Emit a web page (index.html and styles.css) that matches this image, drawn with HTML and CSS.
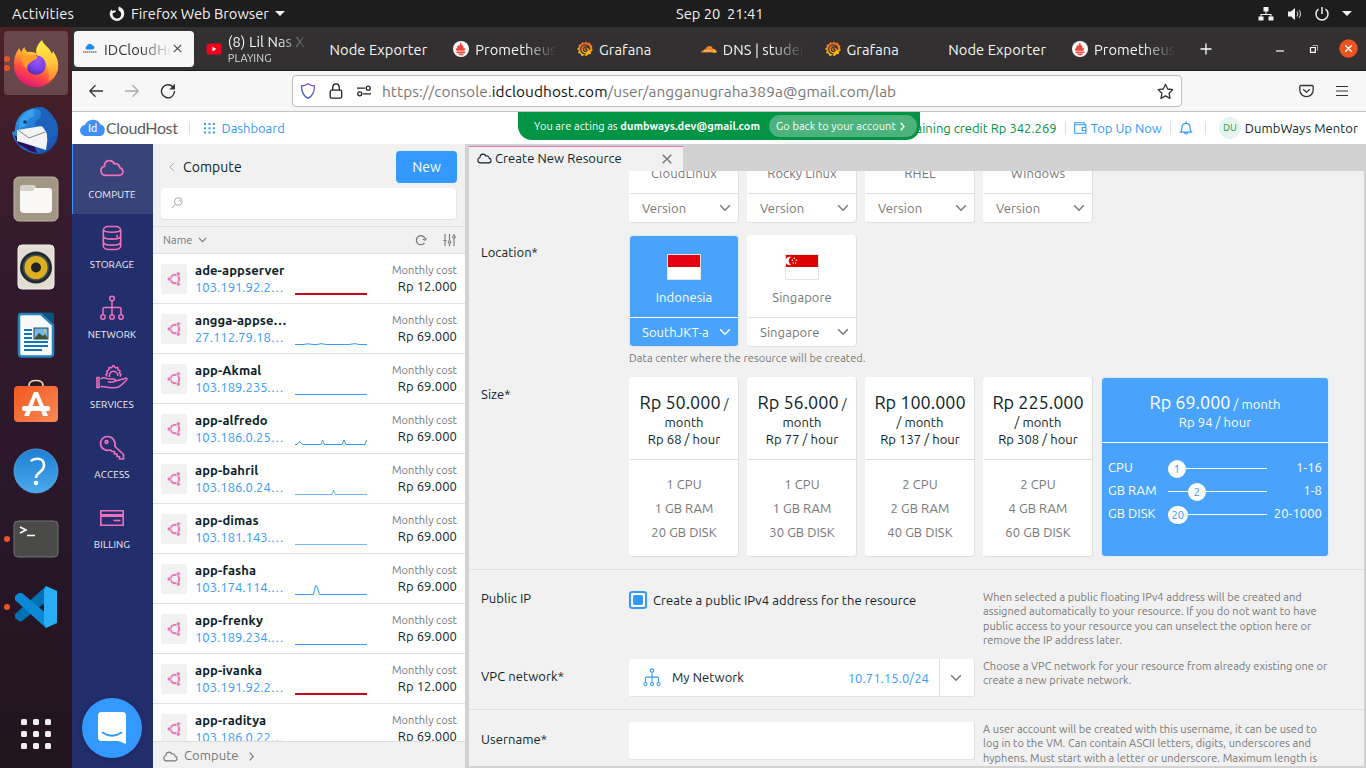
FILE: index.html
```html
<!DOCTYPE html>
<html lang="en">
<head>
<meta charset="utf-8">
<title>IDCloudHost</title>
<link rel="stylesheet" href="styles.css">
</head>
<body>
<svg class="defs" width="0" height="0">
  <defs>
    <linearGradient id="ffBody" x1=".8" y1="0" x2=".3" y2="1"><stop offset="0" stop-color="#fff44f"/><stop offset=".35" stop-color="#ffb02e"/><stop offset=".65" stop-color="#ff4f3e"/><stop offset="1" stop-color="#e0127d"/></linearGradient>
    <linearGradient id="ffFlame" x1=".4" y1="0" x2=".5" y2="1"><stop offset="0" stop-color="#fff04a"/><stop offset=".55" stop-color="#ffc93a"/><stop offset="1" stop-color="#ff8a30"/></linearGradient>
    <radialGradient id="ffGlobe" cx=".6" cy=".25" r=".8"><stop offset="0" stop-color="#a052ff"/><stop offset=".6" stop-color="#7542e5"/><stop offset="1" stop-color="#4a2bb8"/></radialGradient>
    <linearGradient id="bird" x1="0" y1="0" x2="1" y2="1"><stop offset="0" stop-color="#2f9be8"/><stop offset=".6" stop-color="#1f6fd0"/><stop offset="1" stop-color="#1b3f9a"/></linearGradient>
    <linearGradient id="orangeBag" x1="0" y1="0" x2="1" y2="1"><stop offset="0" stop-color="#f4571f"/><stop offset="1" stop-color="#f68a55"/></linearGradient>
    <linearGradient id="helpBlue" x1="0" y1="0" x2="0" y2="1"><stop offset="0" stop-color="#1c7fd6"/><stop offset="1" stop-color="#4ba9ea"/></linearGradient>
    <linearGradient id="grafanaGrad" x1="0" y1="0" x2="0" y2="1"><stop offset="0" stop-color="#f05a28"/><stop offset="1" stop-color="#fbca0a"/></linearGradient>
    <linearGradient id="shieldGrad" x1="1" y1="0" x2="0" y2="1"><stop offset="0" stop-color="#8b4fe8"/><stop offset="1" stop-color="#2a52d8"/></linearGradient>
  </defs>
  <symbol id="chev" viewBox="0 0 12 8"><path d="M1.2 1.3 6 6.3l4.800-5" fill="none" stroke="currentColor" stroke-width="1.400"/></symbol>
  <symbol id="cloud" viewBox="0 0 24 17"><path d="M5.500 15.500A4.300 4.300 0 0 1 4.800 7a5 5 0 0 1 0-1.300C5.300 3 7.300 1.500 9.600 1.500c2.200 0 3.900 1.200 4.600 3 2.800-.8 5.300 1 5.300 3.800 1.800.3 3 1.800 3 3.500 0 2.100-1.600 3.700-3.700 3.700z" fill="none" stroke="currentColor" stroke-linejoin="round" stroke-width="1.700"/></symbol>
  <symbol id="net" viewBox="0 0 24 26"><g fill="none" stroke="currentColor" stroke-width="1.500"><circle cx="12" cy="3.500" r="2.300"/><circle cx="3" cy="22" r="2.200"/><circle cx="12" cy="22" r="2.200"/><circle cx="21" cy="22" r="2.200"/><path d="M12 6v13.500M3 19.500V14q0-1.500 1.500-1.500h15Q21 12.500 21 14v5.500"/></g></symbol>
  <symbol id="ubuntu" viewBox="0 0 14 14"><circle cx="8" cy="7" r="4.200" fill="none" stroke="#e873bd" stroke-width="2"/><path d="M8 7 2 7M8 7l3.300-5.700M8 7l3.300 5.700" stroke="#f1f1f1" stroke-width=".9"/><circle cx="8" cy="7" r="3" fill="#f1f1f1"/><g fill="#e873bd" stroke="#f1f1f1" stroke-width=".6"><circle cx="2.200" cy="7" r="2"/><circle cx="11.300" cy="1.900" r="2"/><circle cx="11.300" cy="12.100" r="2"/></g></symbol>
  <symbol id="prom" viewBox="0 0 16 16"><circle cx="8" cy="8" r="8" fill="#fff"/><path d="M3.500 9.800c-.6-1-.7-1.800-.6-2.600l1.200.4c-.1-1.700.8-2.400.8-3.800.8.500 1 1.100 1.200 1.900C6.200 3.800 7.200 3 7.600 1.300c1.500 1.400 1 2.700 1.500 4.200.3-.8.500-1.300.2-2.200 1.500 1.200.8 2.600 1.300 4.100l1.500-.5c.1 1-.2 2-.8 2.900zM3.500 10.600h9v1.300h-9zM4.900 12.600h6.300c-.5 1.200-1.600 1.900-3.100 1.900s-2.700-.7-3.200-1.900z" fill="#f0463c"/></symbol>
  <symbol id="grafana" viewBox="0 0 16 16"><path d="M9 .4 10.700 2l2.300-.4.700 2.100 1.800 1.200-.7 2.200 1 2-1.700 1.600-.3 2.400-2.400.1L9.500 15l-2.200-1-2.600 1.200-1.100-2.400L1 12.100l.9-2.500L0 7.800l1.900-1.600L1.500 3.600l2.500-.2L5.200 1.100 7.300 2z" fill="url(#grafanaGrad)"/><path d="M12.700 8.800A4.500 4.500 0 1 0 8.700 12.800M12.600 8.500c-.4-3.200-6-3.600-6.200-.2-.1 2.700 3.600 2.700 3.600.3-.2-1-1.700-1-1.800-.1" fill="none" stroke="#343132" stroke-width="1.250"/></symbol>
</svg>

<header class="topbar">
  <span class="activities">Activities</span>
  <span class="appmenu"><svg width="16" height="16" viewBox="0 0 16 16"><path d="M10 .5c4 1.600 5.600 4.500 5.200 8A7.300 7.300 0 0 1 .7 8.500c0-2.100.7-3.800 1.800-5.300.2 1 .5 1.400 1 1.700C4.500 4.500 6 4.500 7.100 5L6 6.500 3.900 6.700A4.300 4.300 0 1 0 11.600 6C9.500 5 8.700 2.900 10 .5z" fill="#f2f2f2"/></svg><b>Firefox Web Browser</b><i class="tri"></i></span>
  <span class="clock">Sep 20&nbsp; 21:41</span>
  <span class="systray">
    <svg width="16" height="16" viewBox="0 0 16 16" fill="#f2f2f2"><rect x="5.500" y="1" width="5" height="4.500"/><rect x="0.500" y="10.500" width="5" height="4"/><rect x="10.500" y="10.500" width="5" height="4"/><path d="M7.500 5h1v3h5v3h-1V9h-9v2h-1V8h5z"/></svg>
    <svg width="16" height="16" viewBox="0 0 16 16"><path d="M2 5.500h3L9 2v12l-4-3.500H2z" fill="#f2f2f2"/><path d="M10.800 5.500q1.700 2.500 0 5M13 4q3 4 0 8" fill="none" stroke="#bbb" stroke-width="1.200"/></svg>
    <svg width="16" height="16" viewBox="0 0 16 16"><path d="M4.500 3.200a6 6 0 1 0 7 0M8 1v7" fill="none" stroke="#eee" stroke-width="1.500"/></svg>
    <i class="tri"></i>
  </span>
</header>

<div class="desktop">
<aside class="dock">
  <div class="dock-item active two"><svg width="48" height="48" viewBox="0 0 48 48"><path d="M42 15c3 4 4 8 4 12A22 21 0 0 1 2 27C1.500 19 4 13 7.500 9c0 2 1 3 2 4 .5-2.200 2-4 3-5 .5 3 2 4 3 5 5-1 8 1 10 2z" fill="url(#ffBody)"/><path d="M30 1c1.500 5 7 7 9 12l1 2 1-3c4 6 6 12 5 18-1 5-5 10-10 12 2-6 1-14-3-18-6-4-11-9-8-16 1-3 3-5 5-7z" fill="url(#ffFlame)"/><circle cx="24" cy="26" r="9.800" fill="url(#ffGlobe)"/><path d="M8.500 18c5-3 8-.5 11-1.500 4-1 6 .5 6 1.500 0 2-4 3-5 4-3 2-6 4-5 8-3-2-5-5-7-12z" fill="#ff9a2c"/></svg></div>
  <div class="dock-item"><svg width="48" height="48" viewBox="0 0 48 48"><path d="M3 24C3 11 12 2 23 1c7 0 11 3 15 6 6 4 9 12 8 20-1 12-10 20-20 20C12 46 2 37 0 25z" fill="url(#bird)"/><path d="M2 28l4 9 12 7 7 2-2-6z" fill="#27135a"/><path d="M5 23l25-4 6 9-2 15L5 34z" fill="#f3f3f5"/><path d="M6 23l11 8 16-6" fill="none" stroke="#888" stroke-width="1"/><path d="M7 21c0-11 8-18 16-19-2 3-2 5 0 7-6 1-9 5-9 10z" fill="#39a2ee"/><path d="M22 2c7-1 8 5 7 7-2 5-9 6-5 10 6-1 12 2 11 13 6-2 8-6 8-10l3 2c-2-11-6-22-21-26z" fill="#1c62bb"/><circle cx="13" cy="15" r="1.800" fill="#0b315d"/></svg></div>
  <div class="dock-item"><svg width="48" height="48" viewBox="0 0 48 48"><rect x="2" y="2" width="44" height="44" rx="5" fill="#a19783" stroke="#beb6a5"/><path d="M8 14q0-4 4-4h8q3 0 4 3h13q3 0 3 3v18q0 4-4 4H12q-4 0-4-4z" fill="#f9f8f6"/><path d="M8 16v-3q0-3 4-3h8q3 0 3 3l-2 3z" fill="#d8d3c9"/></svg></div>
  <div class="dock-item"><svg width="48" height="48" viewBox="0 0 48 48"><rect x="6" y="2" width="36" height="44" rx="4" fill="#e3ddd3" stroke="#f3efe9"/><circle cx="24" cy="24.500" r="16" fill="#242b30"/><circle cx="24" cy="24.500" r="13" fill="#45515b"/><circle cx="24" cy="24.500" r="11.500" fill="#ddb022"/><circle cx="24" cy="24.500" r="5" fill="#23221f"/></svg></div>
  <div class="dock-item"><svg width="48" height="48" viewBox="0 0 48 48"><path d="M9 3h20l12 11v29q0 2.500-3 2.500H10q-3 0-3-3V6q0-3 2-3z" fill="#f7f9fa" stroke="#2583bd" stroke-width="2.500"/><path d="M29 1.500h10q3 0 3 3V13z" fill="#0d5480"/><path d="M12 19h8M12 23h8M12 27h8M12 31h24M12 35h24M12 39h18" stroke="#1477b5" stroke-width="2"/><rect x="22" y="17" width="14" height="11" fill="#75b9e7" stroke="#234e63"/><path d="M22 28l5-6 4 3 2-2 3 5z" fill="#42533b"/><circle cx="33" cy="20" r="1.300" fill="#f2be54"/></svg></div>
  <div class="dock-item"><svg width="48" height="48" viewBox="0 0 48 48"><path d="M17 10V6.500q0-5 7-5t7 5V10" fill="none" stroke="#ecd7a4" stroke-width="1.700"/><rect x="2" y="7" width="44" height="36" rx="4" fill="url(#orangeBag)"/><path d="M22 13h4l10 24h-5L24 18l-7 19h-5z" fill="#fff"/><rect x="10" y="27" width="28" height="5" rx="2" fill="#fff"/></svg></div>
  <div class="dock-item"><svg width="48" height="48" viewBox="0 0 48 48"><circle cx="24" cy="24" r="22" fill="url(#helpBlue)" stroke="#65b6f1" stroke-width=".7"/><path d="M18.500 14q5-3 9-2 4.500 1 4.500 6 0 4-4 7t-4 6" fill="none" stroke="#fff" stroke-width="2.600"/><circle cx="24" cy="36" r="2.300" fill="#fff"/></svg></div>
  <div class="dock-item one"><svg width="48" height="48" viewBox="0 0 48 48"><rect x="2" y="6" width="44" height="36" rx="4" fill="#4a4a49" stroke="#727270"/><path d="M8 12l6 3-6 3M15 20.500h8" fill="none" stroke="#fff" stroke-width="1.600"/></svg></div>
  <div class="dock-item one"><svg width="48" height="48" viewBox="0 0 48 48"><path d="M34 3 3 31v4l4 3q2 1 3 0l24-19z" fill="#0070b5"/><path d="M34 45 3 17v-4l4-3h3l26 22z" fill="#0a8ad6"/><path d="M34 3l11 5v32l-11 5-2-4V7z" fill="#29aef5"/></svg></div>
  <div class="grid-btn"><i></i><i></i><i></i><i></i><i></i><i></i><i></i><i></i><i></i></div>
</aside>

<main class="window">
  <nav class="tabs">
    <div class="tab current"><svg width="16" height="16" viewBox="0 0 16 16"><path d="M4.500 8.500a2 2 0 0 1 .3-3.500 3 3 0 0 1 5.700-.4 2 2 0 0 1 .5 3.900z" fill="#1c8bf0"/><path d="M1 11h14" stroke="#999" stroke-width="1.800" stroke-dasharray="1.500 .5"/></svg><span class="fade dark">IDCloudHost</span><svg class="tabx" width="9" height="9" viewBox="0 0 9 9"><path d="M.8.8l7.400 7.400M8.200.8.8 8.200" stroke="#444" stroke-width="1.100"/></svg></div>
    <div class="tab"><svg width="16" height="16" viewBox="0 0 16 16"><rect x=".5" y="2.500" width="15" height="11" rx="2.500" fill="#f8001c"/><path d="M6.500 5.800v4.400L10.300 8z" fill="#fff"/></svg><span class="fade two-line">(8) Lil Nas X -<small>PLAYING</small></span></div>
    <div class="tab"><span class="fade">Node Exporter</span></div>
    <div class="tab"><svg width="16" height="16"><use href="#prom"/></svg><span class="fade cut">Prometheus</span></div>
    <div class="tab"><svg width="16" height="16"><use href="#grafana"/></svg><span class="fade">Grafana</span></div>
    <div class="tab"><svg width="16" height="16" viewBox="0 0 16 16"><path d="M.3 11.500c0-1.600 1-2.400 2.300-2.300.2-1 1.100-1.200 1.800-.8C5.200 5.500 8 4.200 10 5.300c1.500.8 1.900 2.100 1.700 2.500 2.300 0 3.900 1.600 4 3.700z" fill="#f38020"/><path d="M11.300 11.500l.7-3.200c2-.1 3.500 1.200 3.700 3.200z" fill="#faae40"/><path d="M3 9.800h8" stroke="#fff" stroke-width=".6"/></svg><span class="fade cut">DNS | student</span></div>
    <div class="tab"><svg width="16" height="16"><use href="#grafana"/></svg><span class="fade">Grafana</span></div>
    <div class="tab"><span class="fade">Node Exporter</span></div>
    <div class="tab"><svg width="16" height="16"><use href="#prom"/></svg><span class="fade cut">Prometheus</span></div>
    <svg class="plus" width="12" height="12" viewBox="0 0 12 12"><path d="M6 .5v11M.5 6h11" stroke="#fff" stroke-width="1.300"/></svg>
    <div class="wm">
      <svg width="10" height="10" viewBox="0 0 10 10"><path d="M1 7h8" stroke="#fff" stroke-width="1.200"/></svg>
      <svg width="10" height="10" viewBox="0 0 10 10"><path d="M1.500 3.500h4.800v4.800H1.500z" fill="none" stroke="#fff" stroke-width="1.200"/><path d="M3.500 1.500h5v5" fill="none" stroke="#aaa"/></svg>
      <svg width="19" height="19" viewBox="0 0 19 19"><circle cx="9.500" cy="9.500" r="9.200" fill="#e95420"/><path d="M6.200 6.200l6.600 6.600M12.800 6.200l-6.600 6.600" stroke="#fff" stroke-width="1.400"/></svg>
    </div>
  </nav>

  <div class="toolbar">
    <svg width="16" height="16" viewBox="0 0 16 16"><path d="M15 8H1.800M7.500 2.300 1.800 8l5.700 5.700" fill="none" stroke="#333" stroke-width="1.300"/></svg>
    <svg width="16" height="16" viewBox="0 0 16 16"><path d="M1 8h13.200M8.500 2.300 14.200 8l-5.700 5.700" fill="none" stroke="#aaa" stroke-width="1.300"/></svg>
    <svg width="16" height="16" viewBox="0 0 16 16"><path d="M13.500 4.800A6.500 6.500 0 1 0 14.500 8" fill="none" stroke="#333" stroke-width="1.400"/><path d="M15 .8v5.700H9.300z" fill="#333"/></svg>
    <div class="urlbar">
      <svg width="16" height="16" viewBox="0 0 16 16"><path d="M8 .8c2 1.500 4 2 6.500 2.200 0 6-1.500 10-6.500 12.300C3 13 1.500 9 1.500 3 4 2.800 6 2.300 8 .8z" fill="none" stroke="url(#shieldGrad)" stroke-width="1.300"/></svg>
      <svg width="14" height="16" viewBox="0 0 14 16"><rect x="1.200" y="7.200" width="11.500" height="8" rx="1.500" fill="none" stroke="#222" stroke-width="1.300"/><path d="M3.700 7V4Q4 .8 7 .8T10.300 4v3" fill="none" stroke="#222" stroke-width="1.300"/></svg>
      <svg width="16" height="12" viewBox="0 0 16 12" fill="none" stroke="#222" stroke-width="1.300"><path d="M1 3.200h8M7 8.800h8"/><circle cx="12.200" cy="3.200" r="2"/><circle cx="3.800" cy="8.800" r="2"/></svg>
      <span class="url">https://console.<em>idcloudhost.com</em>/user/angganugraha389a@gmail.com/lab</span>
      <svg class="star" width="17" height="17" viewBox="0 0 17 17"><path d="M8.500 1.300l2.200 4.700 5.100.6-3.700 3.600.9 5.200-4.500-2.500-4.500 2.500.9-5.200L1.200 6.600l5.100-.6z" fill="none" stroke="#333" stroke-width="1.300" stroke-linejoin="round"/></svg>
    </div>
    <svg class="pocket" width="15" height="14" viewBox="0 0 15 14"><path d="M1.800 1.500h11.400q1 0 1 1V6a6.700 6.700 0 0 1-13.400 0V2.500q0-1 1-1z" fill="none" stroke="#333" stroke-width="1.300"/><path d="M4.200 5.300 7.500 8.200l3.300-2.900" fill="none" stroke="#333" stroke-width="1.300"/></svg>
    <svg class="burger" width="12" height="12" viewBox="0 0 12 12"><path d="M0 1.500h12M0 6h12M0 10.500h12" stroke="#333" stroke-width="1.200"/></svg>
  </div>

  <div class="apphead">
    <svg class="logo" width="26" height="18" viewBox="0 0 26 18"><path d="M6 17A5.500 5.500 0 0 1 5 6 8.500 8.500 0 0 1 20.500 5.500 6 6 0 0 1 20.500 17z" fill="#3f90f5"/></svg><span class="id">Id</span><span class="brand">CloudHost</span>
    <i class="sep"></i>
    <svg class="dots" width="11" height="11" viewBox="0 0 11 11"><path d="M0 1h11M0 5.300h11M0 9.600h11" stroke="#3399ff" stroke-width="2" stroke-dasharray="2 2.500"/></svg><span class="dash">Dashboard</span>
    <div class="headright">
      <span class="credit">Remaining credit Rp 342.269</span><i class="sep"></i>
      <svg width="13" height="12" viewBox="0 0 13 12" fill="none" stroke="#3399ff" stroke-width="1.100"><path d="M.7 2.700v8.600h11.200V2.700zM.7 2.700V.8h9.500v1.900M11.900 5.500H8.300v3h3.600"/></svg><span class="topup">Top Up Now</span><i class="sep"></i>
      <svg width="14" height="14" viewBox="0 0 14 14" fill="none" stroke="#3399ff" stroke-width="1.200"><path d="M1.500 11.200Q3 10 3 6.500C3 4 4.500 2.300 7 2.300S11 4 11 6.500q0 3.500 1.500 4.700zM7 2.300V.5M5.500 11.500q0 1.500 1.500 1.500t1.500-1.500"/></svg><i class="sep"></i>
      <span class="avatar">DU</span><span class="user">DumbWays Mentor</span>
    </div>
    <div class="acting"><span>You are acting as <b>dumbways.dev@gmail.com</b></span><span class="pill">Go back to your account<svg width="5" height="9" viewBox="0 0 5 9"><path d="M.8.8l3.200 3.700L.8 8.200" fill="none" stroke="#fff" stroke-width="1.300"/></svg></span></div>
  </div>

  <div class="appbody">
    <nav class="side">
      <a class="on"><svg width="26" height="26" viewBox="0 -4 24 25"><use href="#cloud" width="24" height="17"/></svg>COMPUTE</a>
      <a><svg width="26" height="26" viewBox="0 0 26 26" fill="none" stroke="currentColor" stroke-width="1.600"><rect x="4.300" y="1.500" width="17.400" height="23" rx="5" ry="4"/><path d="M4.500 5c1 3 16 3 17 0M4.500 11.500c1 3.500 16 3.500 17 0M4.500 17.500c1 3.500 16 3.500 17 0M18 10v2.500"/></svg>STORAGE</a>
      <a><svg width="26" height="26"><use href="#net"/></svg>NETWORK</a>
      <a><svg width="32" height="26" viewBox="0 0 32 26" fill="none" stroke="currentColor" stroke-width="1.500"><path d="M1 12.500h2v10H1zM4.500 14c4-3 6 0 8 0h5c3 0 2 3-.5 3h-5M18 16.500l7-2c2-.8 3-.3 4.500-1.500 2 0 2 1.500 0 3-4 4-6 6.500-9 6.500-6 1-10-1-16-1"/><path d="M11 11.500l-1-2 1.500-1.500-.7-2 2-1.200.3-2.200 2.400.2 1.500-2h1l1.300 2 2.500-.2.300 2.200 2 1.200-.7 2 1.500 1.500-1 2.300M13.500 12c-1-7 8-8 8.500-1"/></svg>SERVICES</a>
      <a><svg width="26" height="26" viewBox="0 0 26 26" fill="none" stroke="currentColor" stroke-width="1.700" stroke-linejoin="round"><path d="M16 11.500l8.500 8V24h-4v-2.500H18V19h-2.500v-2.500H13L11.500 15C6 16.500 1.500 13 1.500 8.500c0-4 3-7 7-7 5 0 8.500 4.500 7.500 10z"/><circle cx="7.500" cy="7" r="1.400"/></svg>ACCESS</a>
      <a><svg width="26" height="26" viewBox="0 0 26 26"><path d="M1.800 5.800h22.400v14.400H1.800z" fill="none" stroke="currentColor" stroke-width="1.600"/><path d="M2 10.500h22" stroke="currentColor" stroke-width="3"/><path d="M14.500 15.500h7" stroke="currentColor" stroke-width="1.600"/></svg>BILLING</a>
      <div class="chat"><svg width="28" height="33" viewBox="0 0 28 33"><path d="M3.500 0h21Q28 0 28 3.500V32l-7.500-3H3.500Q0 29 0 25.500v-22Q0 0 3.500 0z" fill="#fff"/><path d="M4.500 20.500q9.500 6.500 19 0" fill="none" stroke="#3399ff" stroke-width="1.800" stroke-linecap="round"/></svg></div>
    </nav>

    <section class="list">
      <div class="listhead"><svg width="6" height="10" viewBox="0 0 6 10"><path d="M5.200.8.9 5l4.300 4.200" fill="none" stroke="#aaa"/></svg><h1>Compute</h1><button>New</button></div>
      <div class="search"><svg width="12" height="12" viewBox="0 0 12 12" fill="none" stroke="#aaa"><circle cx="7.300" cy="4.500" r="3.800"/><path d="M4.300 7.300.7 11.200M7.500 3q2 0 2 2"/></svg></div>
      <div class="sort"><span>Name</span><svg width="9" height="6"><use href="#chev"/></svg><svg width="12" height="12" viewBox="0 0 12 12"><path d="M10 4.500A4.500 4.500 0 1 0 9.500 8.800M11.500 4.200 10 6.300 7.800 5" fill="none" stroke="#777" stroke-width="1.200"/></svg><svg width="13" height="12" viewBox="0 0 13 12" fill="none" stroke="#777" stroke-width="1.100"><path d="M2 0v12M6.500 0v6M6.500 10v2M11 0v1.500M11 4.500V12M.5 6.500h3"/><circle cx="6.500" cy="8" r="1.300"/><circle cx="11" cy="3" r="1.300"/></svg></div>
      <div class="rows">
        <div class="row"><i class="os"><svg width="14" height="14"><use href="#ubuntu"/></svg></i><div class="nm"><b>ade-appserver</b><span>103.191.92.2…</span></div><svg class="spark" width="72" height="20"><path class="down" d="M0 18h72"/></svg><div class="cost"><small>Monthly cost</small>Rp 12.000</div></div>
        <div class="row"><i class="os"><svg width="14" height="14"><use href="#ubuntu"/></svg></i><div class="nm"><b>angga-appse…</b><span>27.112.79.18…</span></div><svg class="spark" width="72" height="20"><path d="M0 18.500h8l5-.7 5 .7h4l4-.9 5 .9h23l6-.9 4 .9h8"/></svg><div class="cost"><small>Monthly cost</small>Rp 69.000</div></div>
        <div class="row"><i class="os"><svg width="14" height="14"><use href="#ubuntu"/></svg></i><div class="nm"><b>app-Akmal</b><span>103.189.235.…</span></div><svg class="spark" width="72" height="20"><path d="M0 18.500h72"/></svg><div class="cost"><small>Monthly cost</small>Rp 69.000</div></div>
        <div class="row"><i class="os"><svg width="14" height="14"><use href="#ubuntu"/></svg></i><div class="nm"><b>app-alfredo</b><span>103.186.0.25…</span></div><svg class="spark" width="72" height="20"><path d="M0 18.500h2l2.500-3 3 3h18.500l1.500-4.500 2 4.500h17.500l2-4.500 2 4.500h19l1.500-4.500"/></svg><div class="cost"><small>Monthly cost</small>Rp 69.000</div></div>
        <div class="row"><i class="os"><svg width="14" height="14"><use href="#ubuntu"/></svg></i><div class="nm"><b>app-bahril</b><span>103.186.0.24…</span></div><svg class="spark" width="72" height="20"><path class="thin" d="M0 18.500h37l1.500-4.500 2 4.500H72"/></svg><div class="cost"><small>Monthly cost</small>Rp 69.000</div></div>
        <div class="row"><i class="os"><svg width="14" height="14"><use href="#ubuntu"/></svg></i><div class="nm"><b>app-dimas</b><span>103.181.143.…</span></div><svg class="spark" width="72" height="20"><path class="thin" d="M0 18.500h72"/></svg><div class="cost"><small>Monthly cost</small>Rp 69.000</div></div>
        <div class="row"><i class="os"><svg width="14" height="14"><use href="#ubuntu"/></svg></i><div class="nm"><b>app-fasha</b><span>103.174.114.…</span></div><svg class="spark" width="72" height="20"><path d="M0 18.500h18.500l2-9 1.500 1 2.500 8H72"/></svg><div class="cost"><small>Monthly cost</small>Rp 69.000</div></div>
        <div class="row"><i class="os"><svg width="14" height="14"><use href="#ubuntu"/></svg></i><div class="nm"><b>app-frenky</b><span>103.189.234.…</span></div><svg class="spark" width="72" height="20"><path d="M0 18.500h72"/></svg><div class="cost"><small>Monthly cost</small>Rp 69.000</div></div>
        <div class="row"><i class="os"><svg width="14" height="14"><use href="#ubuntu"/></svg></i><div class="nm"><b>app-ivanka</b><span>103.191.92.2…</span></div><svg class="spark" width="72" height="20"><path class="down" d="M0 18h72"/></svg><div class="cost"><small>Monthly cost</small>Rp 12.000</div></div>
        <div class="row"><i class="os"><svg width="14" height="14"><use href="#ubuntu"/></svg></i><div class="nm"><b>app-raditya</b><span>103.186.0.22…</span></div><svg class="spark" width="72" height="20"></svg><div class="cost"><small>Monthly cost</small>Rp 69.000</div></div>
      </div>
      <div class="crumb"><svg width="15" height="11"><use href="#cloud"/></svg><span>Compute</span><svg width="5" height="9" viewBox="0 0 5 9"><path d="M.7.7 4.200 4.500.7 8.300" fill="none" stroke="#777" stroke-width="1.200"/></svg></div>
    </section>

    <section class="panel">
      <div class="ptab"><svg width="15" height="11"><use href="#cloud"/></svg><span>Create New Resource</span><svg width="10" height="10" viewBox="0 0 10 10"><path d="M.7.7l8.600 8.600M9.300.7.7 9.300" stroke="#777" stroke-width="1.400"/></svg></div>
      <div class="form">
        <div class="line os-line"><label></label><div class="cards">
          <div class="card"><div class="top">CloudLinux</div><div class="pick"><span>Version</span><svg width="12" height="8"><use href="#chev"/></svg></div></div>
          <div class="card"><div class="top">Rocky Linux</div><div class="pick"><span>Version</span><svg width="12" height="8"><use href="#chev"/></svg></div></div>
          <div class="card"><div class="top">RHEL</div><div class="pick"><span>Version</span><svg width="12" height="8"><use href="#chev"/></svg></div></div>
          <div class="card"><div class="top">Windows</div><div class="pick"><span>Version</span><svg width="12" height="8"><use href="#chev"/></svg></div></div>
        </div></div>
        <div class="line loc-line"><label>Location*</label><div><div class="cards">
          <div class="card sel"><div class="top"><svg width="34" height="26" viewBox="0 0 34 26"><path d="M.5.500h33v25H.5z" fill="#fff" stroke="#e4e4e4"/><path d="M1 1h32v12H1z" fill="#e70011"/></svg>Indonesia</div><div class="pick"><span>SouthJKT-a</span><svg width="12" height="8"><use href="#chev"/></svg></div></div>
          <div class="card"><div class="top"><svg width="34" height="26" viewBox="0 0 34 26"><path d="M.5.500h33v25H.5z" fill="#fff" stroke="#e4e4e4"/><path d="M1 1h32v12H1z" fill="#df0000"/><path d="M6 3a4.200 4.200 0 1 0 0 8 4.600 4.600 0 0 1 0-8z" fill="#fff"/><g fill="#fff"><circle cx="9.300" cy="4.300" r=".7"/><circle cx="7.400" cy="6.300" r=".7"/><circle cx="11.400" cy="6.300" r=".7"/><circle cx="8.200" cy="9" r=".7"/><circle cx="10.600" cy="9" r=".7"/></g></svg>Singapore</div><div class="pick"><span>Singapore</span><svg width="12" height="8"><use href="#chev"/></svg></div></div>
        </div><p class="hint">Data center where the resource will be created.</p></div></div>
        <div class="line size-line"><label>Size*</label><div class="cards">
          <div class="card size"><div class="price"><p><big>Rp 50.000</big> /</p><p>month</p><p class="hr">Rp 68 / hour</p></div><ul><li>1 CPU</li><li>1 GB RAM</li><li>20 GB DISK</li></ul></div>
          <div class="card size"><div class="price"><p><big>Rp 56.000</big> /</p><p>month</p><p class="hr">Rp 77 / hour</p></div><ul><li>1 CPU</li><li>1 GB RAM</li><li>30 GB DISK</li></ul></div>
          <div class="card size"><div class="price"><p><big>Rp 100.000</big></p><p>/ month</p><p class="hr">Rp 137 / hour</p></div><ul><li>2 CPU</li><li>2 GB RAM</li><li>40 GB DISK</li></ul></div>
          <div class="card size"><div class="price"><p><big>Rp 225.000</big></p><p>/ month</p><p class="hr">Rp 308 / hour</p></div><ul><li>2 CPU</li><li>4 GB RAM</li><li>60 GB DISK</li></ul></div>
          <div class="card sel custom"><div class="price"><p><big>Rp 69.000</big> / month</p><p class="hr">Rp 94 / hour</p></div>
            <div class="sliders">
              <div><span>CPU</span><i class="track"><b>1</b></i><em>1-16</em></div>
              <div><span>GB RAM</span><i class="track"><b style="margin-left:20px">2</b></i><em>1-8</em></div>
              <div><span>GB DISK</span><i class="track"><b>20</b></i><em>20-1000</em></div>
            </div></div>
        </div></div>
        <div class="line ip-line"><label>Public IP</label><div class="check"><i></i><span>Create a public IPv4 address for the resource</span></div><p class="hint">When selected a public floating IPv4 address will be created and<br>assigned automatically to your resource. If you do not want to have<br>public access to your resource you can unselect the option here or<br>remove the IP address later.</p></div>
        <div class="line vpc-line"><label>VPC network*</label><div class="select"><svg width="18" height="19" viewBox="0 0 24 26"><use href="#net" width="24" height="26"/></svg><span>My Network</span><em>10.71.15.0/24</em><i><svg width="12" height="8"><use href="#chev"/></svg></i></div><p class="hint">Choose a VPC network for your resource from already existing one or<br>create a new private network.</p></div>
        <div class="line user-line"><label>Username*</label><div class="select"></div><p class="hint">A user account will be created with this username, it can be used to<br>log in to the VM. Can contain ASCII letters, digits, underscores and<br>hyphens. Must start with a letter or underscore. Maximum length is</p></div>
      </div>
    </section>
  </div>
</main>
</div>
</body>
</html>
```
FILE: styles.css
```css
* { box-sizing: border-box; }
body { margin: 0; width: 1366px; height: 768px; overflow: hidden; display: flex; flex-direction: column; font: 13px/16px Ubuntu, "Noto Sans", sans-serif; letter-spacing: .07px; color: #0e1f2a; white-space: nowrap; }
p, h1, ul { margin: 0; padding: 0; font-weight: 400; }
svg { display: block; flex: none; }
.defs { position: absolute; }
i, em { font-style: normal; }
i { display: block; }

.topbar { height: 27px; flex: none; background: #1d1d1d; color: #f2f2f2; display: grid; grid-template-columns: 97px 567px 200px 1fr; align-items: center; padding: 0 14px 0 12px; font-size: 14.670px; letter-spacing: 0; }
.activities { letter-spacing: .2px; }
.appmenu { display: flex; align-items: center; gap: 6px; }
.appmenu b { font-weight: 400; }
.tri { border: 5px solid transparent; border-top-color: #f2f2f2; border-bottom: 0; }
.systray { display: flex; justify-content: flex-end; align-items: center; gap: 12px; }

.desktop { flex: 1; display: flex; min-height: 0; }
.dock { width: 72px; flex: none; background: linear-gradient(#4a2023 0, #3f1d2b 14%, #321a2e 35%, #29172a 65%, #22151d 100%); padding: 4px 4px 0; display: flex; flex-direction: column; gap: 4px; }
.dock-item { height: 64px; display: flex; align-items: center; justify-content: center; position: relative; border-radius: 4px; }
.dock-item.active { background: #674749; }
.one::before, .two::before, .two::after { content: ""; position: absolute; left: 0; top: 29px; width: 6px; height: 6px; border-radius: 50%; background: #e95420; }
.two::before { top: 25px; }
.two::after { top: 34px; }
.grid-btn { margin: auto auto 19px; display: grid; grid-template-columns: repeat(3, 6px); gap: 6px; }
.grid-btn i { width: 6px; height: 6px; border-radius: 1.500px; background: #f0eeee; }

.window { flex: 1; min-width: 0; display: flex; flex-direction: column; background: #fff; }
.tabs { height: 44px; flex: none; background: #323031; border-bottom: 1px solid #1c1c1c; display: flex; align-items: center; color: #f5f5f5; font-size: 14.670px; }
.tab { width: 123.750px; height: 36px; flex: none; padding-left: 10px; display: flex; align-items: center; gap: 6px; }
.tab.current { background: #f7f7f7; width: 120px; margin: 0 1.750px 0 2px; padding-left: 8px; border-radius: 4px; color: #333; }
.fade { overflow: hidden; width: 104px; line-height: 20px; padding-top: 2px; }
.fade.cut, .two-line { width: 81px; -webkit-mask: linear-gradient(90deg, #000 60%, transparent); mask: linear-gradient(90deg, #000 60%, transparent); }
.fade.dark { width: 68px; -webkit-mask: linear-gradient(90deg, #000 55%, transparent); mask: linear-gradient(90deg, #000 55%, transparent); }
.tabx { margin-left: -5px; }
.fade.two-line { line-height: 16px; padding-top: 2px; }
.two-line small { display: block; font-size: 11px; line-height: 16px; color: #ddd; letter-spacing: .1px; }
.plus { margin-left: 14px; }
.wm { margin-left: auto; margin-right: 8px; display: flex; align-items: center; gap: 24px; }
.wm svg:last-child { margin-left: -4px; }

.toolbar { height: 41px; flex: none; background: #f7f7f7; border-bottom: 1px solid #c4c4c4; padding: 0 18px 0 16px; display: flex; align-items: center; gap: 20px; }
.urlbar { margin-left: 96px; width: 890px; height: 32px; flex: none; background: #fff; border: 1px solid #bdbdbd; border-radius: 4px; display: flex; align-items: center; gap: 13px; padding: 0 7px; }
.url { margin-left: -3px; margin-top: 1px; font-size: 15.400px; line-height: 20px; color: #777; letter-spacing: .08px; }
.url em { color: #111; }
.star { margin-left: auto; }
.pocket { margin-left: auto; }
.burger { margin-left: 2px; width: 12px; }

.apphead { height: 32px; flex: none; position: relative; display: flex; align-items: center; padding: 0 8px 0; letter-spacing: 0; }
.id { color: #fff; margin-left: -18px; font: 11px/16px Lato, sans-serif; }
.brand { margin-left: 9px; font: 16px/20px Lato, sans-serif; letter-spacing: -.4px; color: #5c5c5c; }
.sep { width: 1px; height: 14px; background: #ddd; }
.brand + .sep { margin-left: 12px; }
.dots { margin: 0 6px 0 14px; }
.dash, .topup { color: #3399ff; }
.headright { margin-left: auto; display: flex; align-items: center; }
.credit { color: #009444; margin-right: 8px; }
.headright .sep + svg { margin-left: 8px; }
.topup { margin: 0 8px 0 4px; }
.headright svg + .sep { margin: 0 13px 0 12px; }
.user { letter-spacing: .06px; }
.avatar { width: 22px; height: 22px; border-radius: 50%; background: #e5f4ec; color: #1a9c55; font-size: 10px; line-height: 22px; text-align: center; margin-right: 4px; }
.acting { position: absolute; left: 446px; top: 0; width: 402px; height: 28px; background: #009444; border-radius: 0 0 14px 14px; display: flex; align-items: center; justify-content: space-between; padding: 0 3px 0 16px; color: #fff; font-size: 11px; letter-spacing: .05px; }
.pill { width: 148px; height: 22px; border-radius: 11px; background: #4db37d; display: flex; align-items: center; padding-left: 7px; gap: 4px; }

.appbody { flex: 1; min-height: 0; display: flex; }
.side { width: 81px; flex: none; background: #232e6c; display: flex; flex-direction: column; }
.side a { height: 70px; display: flex; flex-direction: column; align-items: center; padding-top: 11px; font-size: 10px; line-height: 28px; letter-spacing: .12px; color: #f0f2f8; }
.side a svg { color: #f070bd; }
.side a:not(.on) { padding-right: 1px; }
.side a.on { background: #38437a; border-left: 1px solid #3399ff; padding-right: 2px; }
.chat { width: 60px; height: 60px; border-radius: 50%; background: #3399ff; margin: auto auto 10px 10px; display: flex; align-items: center; justify-content: center; box-shadow: 0 1px 6px rgba(0,0,0,.2); }

.list { width: 312px; flex: none; background: #f1f1f1; display: flex; flex-direction: column; }
.listhead { height: 44px; padding: 2px 8px 0 16px; display: flex; align-items: center; gap: 8px; }
h1 { font-size: 14px; flex: 1; }
button { width: 61px; height: 32px; padding: 0; border: 0; border-radius: 4px; background: #3399ff; color: #fff; font: inherit; font-size: 14px; }
.search { height: 32px; margin: 0 8px; padding: 9px 10px; background: #fff; border-bottom: 1px solid #e0e0e0; border-right: 1px solid #e4e4e4; border-radius: 4px; }
.sort { margin-top: 6px; height: 28px; border: solid #e1e1e1; border-width: 1px 0; padding: 0 9px 0 10px; display: flex; align-items: center; gap: 6px; color: #777; font-size: 11px; }
.sort svg:nth-of-type(2) { margin-left: auto; margin-right: 10px; }
.rows { flex: 1; min-height: 0; overflow: hidden; background: #fff; }
.row { height: 50px; border-bottom: 1px solid #e1e1e1; padding: 0 8px; display: flex; align-items: center; }
.os { width: 26px; height: 30px; border-radius: 2px; background: #f1f1f1; display: flex; align-items: center; justify-content: center; margin-right: 8px; }
.nm { width: 100px; }
.nm b, .nm span { display: block; line-height: 17px; }
.nm b { letter-spacing: .08px; }
.nm span { color: #3399ff; letter-spacing: .02px; }
.spark { margin-top: 14px; overflow: visible; }
.spark path { fill: none; stroke: #3399ff; stroke-width: 1; }
.spark .thin { stroke-width: .7; }
.spark .down { stroke: #d0021b; stroke-width: 2; }
.cost { margin-left: auto; text-align: right; padding-bottom: 1px; }
.cost small { display: block; font-size: 11px; color: #777; line-height: 17px; margin-bottom: -1px; }
.crumb { height: 27px; flex: none; border-top: 1px solid #ddd; padding: 2px 10px 0; display: flex; align-items: center; gap: 6px; color: #777; }
.crumb span { margin-top: -2px; }
.crumb svg:last-child { margin-left: 4px; }

.panel { flex: 1; min-width: 0; background: #d2d2d2; padding: 2px 2px 2px 4px; display: flex; flex-direction: column; }
.ptab { width: 214px; height: 25px; flex: none; background: #f1f1f1; border-top: 1px solid #e873bd; padding: 0 11px 1px 8px; display: flex; align-items: center; gap: 3px; }
.ptab span { margin-top: -2px; }
.ptab svg:last-child { margin-left: auto; }
.form { flex: 1; min-height: 0; overflow: hidden; background: #f1f1f1; }
.line { display: flex; padding-left: 12px; align-items: flex-start; }
label { width: 148px; flex: none; }
.cards { display: flex; gap: 8px; }
.card { width: 110px; height: 112px; background: #fff; border: 1px solid #e0e0e0; border-top-color: #fff; border-left-color: #fff; border-radius: 4px; color: #777; display: flex; flex-direction: column; }
.card .top { flex: 1; display: flex; flex-direction: column; align-items: center; justify-content: flex-end; padding-bottom: 12px; }
.card .top svg { margin-bottom: 9px; }
.pick { height: 29px; flex: none; border-top: 1px solid #e0e0e0; padding: 0 7px 0 12px; display: flex; align-items: center; justify-content: space-between; }
.sel { background: #49a3fd; border-color: #dcecfb; color: #fff; }
.sel .pick { border-color: #fff; }
.os-line { margin-top: -60px; height: 124px; }
.loc-line { height: 142px; }
.loc-line label, .size-line label { padding-top: 9px; }
.hint { font-size: 11px; line-height: 14.300px; color: #777; letter-spacing: .06px; }
.loc-line .hint { margin-top: 4px; }
.size-line { height: 193px; border-bottom: 1px solid #e1e1e1; }
.size-line .card { height: 180px; }
.price { height: 82px; flex: none; border-bottom: 1px solid #e0e0e0; color: #0e1f2a; text-align: center; padding-top: 14px; line-height: 17px; }
.price p:first-child { line-height: 21px; margin-bottom: -1px; }
big { font-size: 18px; letter-spacing: 0; }
ul { list-style: none; text-align: center; padding-top: 12px; line-height: 24px; }
.size-line .custom { width: 228px; margin-left: 0; }
.custom .price { height: 65px; color: #fff; border-color: #fff; }
.sliders { padding: 13px 6px; }
.sliders div { height: 23px; display: flex; align-items: center; }
.sliders span { width: 60px; }
.sliders span, .sliders em { margin-top: -1px; }
.track { width: 99px; background: linear-gradient(#fff, #fff) 0 50%/100% 1px no-repeat; display: flex; height: 18px; margin-top: 2px; }
.track b { min-width: 18px; height: 18px; padding: 0 3.500px; border-radius: 9px; background: #fff; color: #3399ff; font-weight: 400; font-size: 11px; line-height: 18px; text-align: center; }
.sliders em { margin-left: auto; }
.ip-line { padding-top: 20px; height: 89px; }
.ip-line .check, .select { width: 346px; flex: none; margin-right: 8px; display: flex; align-items: center; }
.check { gap: 6px; padding-top: 1px; }
.check i { width: 18px; height: 18px; border: 2px solid #3399ff; border-radius: 3px; background: #fff; padding: 2px; }
.check i::before { content: ""; display: block; height: 10px; border-radius: 2px; background: #3399ff; }
.vpc-line { height: 51px; border-bottom: 1px solid #e1e1e1; }
.vpc-line label { padding-top: 9px; }
.select { height: 38px; background: #fff; border-radius: 3px; border: solid #e0e0e0; border-width: 0 1px 1px 0; padding-left: 14px; }
.select svg { color: #3399ff; }
.select span { margin-left: 11px; margin-top: -1px; }
.select em { margin-left: auto; margin-right: 10px; color: #3399ff; }
.select i { width: 35px; height: 37px; border-left: 1px solid #e0e0e0; display: flex; align-items: center; justify-content: center; padding-right: 2px; }
.select i svg { color: #777; }
.user-line { padding-top: 12px; }
.user-line label { padding-top: 9px; }
```
